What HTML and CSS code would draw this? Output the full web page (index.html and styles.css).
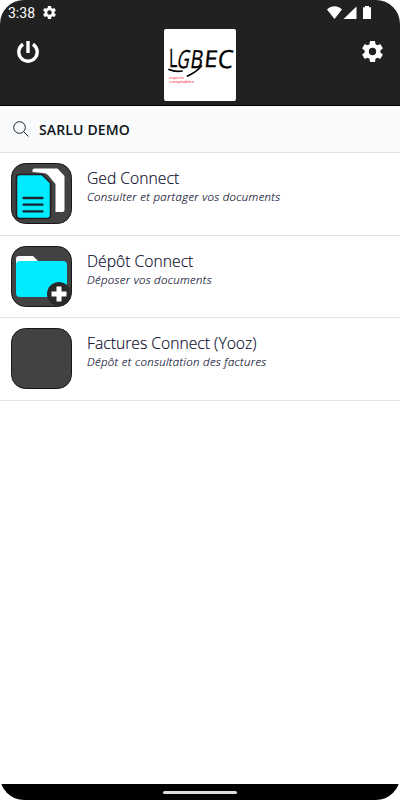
FILE: index.html
```html
<!DOCTYPE html>
<html lang="fr">

<head>
    <meta charset="UTF-8">
    <meta name="viewport" content="width=device-width, initial-scale=1.0">
    <title>LGBEC</title>
    <link rel="stylesheet" href="styles.css">
</head>

<body>
    <div class="phone">
        <header class="header">
            <div class="status">
                <span class="time">3:38</span>
                <svg class="status-gear" viewBox="2 2 20 20"><use href="#gear" /></svg>
                <svg class="status-icons" width="46" height="14" viewBox="0 0 46 14">
                    <path d="M0 3.4C4.500-.7 10.500-.7 15 3.400L7.500 13z" />
                    <path d="M29.500.5V13H16.500z" />
                    <path d="M38 0h4v1.300h2V13h-8V1.300h2z" />
                </svg>
            </div>
            <div class="toolbar">
                <svg class="power" width="22" height="22" viewBox="0 0 22 22">
                    <path d="M6.100 3.200a9.200 9.200 0 1 0 9.800 0" />
                    <path d="M11 0v12" />
                </svg>
                <svg class="logo" width="72" height="72" viewBox="0 0 72 72">
                    <rect width="72" height="72" rx="2" fill="#fff" />
                    <g class="logo-letters">
                        <text transform="translate(5 38) scale(.64 1)" font-size="25">L</text>
                        <text transform="translate(12 39) skewX(-12) scale(.68 1)" font-size="25">G</text>
                        <text transform="translate(25.500 38.500) skewX(-8) scale(.78 1)" font-size="25">B</text>
                        <text transform="translate(39.500 38) skewX(-6) scale(1.05 1)" font-size="23">E</text>
                        <text transform="translate(53 38.500) skewX(-6) scale(.98 1)" font-size="25">C</text>
                    </g>
                    <path class="stroke" d="M5 40.500q6 2.500 13 1.500M37.500 37q-5 6-14 10" />
                    <text class="logo-sub" x="5" y="49.500" textLength="15" lengthAdjust="spacingAndGlyphs">experts</text>
                    <text class="logo-sub" x="5" y="53.700" textLength="25" lengthAdjust="spacingAndGlyphs">comptables</text>
                </svg>
                <svg class="settings" viewBox="2 2 20 20">
                    <path id="gear" d="M19.430 12.980c.04-.32.070-.64.070-.98s-.030-.66-.070-.98l2.110-1.650c.19-.15.240-.42.120-.64l-2-3.460c-.12-.22-.39-.3-.61-.22l-2.490 1c-.52-.4-1.080-.73-1.690-.98l-.38-2.650C14.460 2.180 14.250 2 14 2h-4c-.25 0-.46.18-.49.420l-.38 2.650c-.61.250-1.170.59-1.690.98l-2.490-1c-.23-.09-.49 0-.61.220l-2 3.460c-.13.220-.07.490.12.640l2.110 1.650c-.04.320-.07.650-.07.980s.030.660.070.980l-2.110 1.650c-.19.150-.24.420-.12.640l2 3.460c.12.220.39.300.61.220l2.490-1c.52.400 1.080.730 1.690.980l.38 2.650c.03.240.24.420.49.420h4c.25 0 .46-.18.490-.42l.38-2.650c.61-.25 1.170-.59 1.690-.98l2.490 1c.23.090.49 0 .61-.22l2-3.460c.12-.22.070-.49-.12-.64zM12 15.500a3.500 3.500 0 1 1 0-7 3.500 3.500 0 0 1 0 7z" />
                </svg>
            </div>
        </header>

        <div class="search">
            <svg width="17" height="17" viewBox="0 0 17 17">
                <circle cx="6.500" cy="6.500" r="5.800" />
                <path d="M10.500 10.500l5 5" />
            </svg>
            <span>SARLU DEMO</span>
        </div>

        <main class="list">
            <div class="item">
                <svg class="item-icon" viewBox="0 0 61 61">
                    <rect class="tile" x=".5" y=".5" width="60" height="60" rx="14" />
                    <path class="white" d="M21.500 9V7q0-1.500 2-1.500h23l7 7.500v34q0 2-2 2h-7V21L37 12q-2-2-5-2z" />
                    <path class="page" d="M9 11.500h22l8.500 8.500v32q0 3.500-3.500 3.500H9q-3.500 0-3.500-3.500V15q0-3.500 3.500-3.500z" />
                    <path class="lines" d="M12.500 35h19M12.500 41.700h19M12.500 48.400h19" />
                </svg>
                <div>
                    <h2>Ged Connect</h2>
                    <p>Consulter et partager vos documents</p>
                </div>
            </div>
            <div class="item">
                <svg class="item-icon" viewBox="0 0 61 61">
                    <rect class="tile" x=".5" y=".5" width="60" height="60" rx="14" />
                    <path class="white" d="M5 19v-6q0-3 3-3h14l5 5v5H5z" />
                    <rect class="folder" x="5" y="15" width="51" height="36" rx="4" />
                    <circle class="badge" cx="48" cy="48" r="12" />
                    <path class="plus" d="M48 40.500v15M40.500 48h15" />
                </svg>
                <div>
                    <h2>Dépôt Connect</h2>
                    <p>Déposer vos documents</p>
                </div>
            </div>
            <div class="item">
                <svg class="item-icon" viewBox="0 0 61 61">
                    <rect class="tile" x=".5" y=".5" width="60" height="60" rx="14" />
                </svg>
                <div>
                    <h2>Factures Connect (Yooz)</h2>
                    <p>Dépôt et consultation des factures</p>
                </div>
            </div>
        </main>

        <footer class="navbar">
            <div class="handle"></div>
        </footer>
    </div>
</body>

</html>
```
FILE: styles.css
```css
* {
    box-sizing: border-box;
}

body {
    margin: 0;
    background: #fff;
    font-family: "Open Sans", sans-serif;
}

.phone {
    height: 800px;
    display: flex;
    flex-direction: column;
    border-radius: 24px;
    overflow: hidden;
}

.header {
    height: 106px;
    background: #212121;
    border-bottom: 1px solid #000;
    color: #fff;
    fill: #fff;
}

.status {
    height: 25px;
    padding-left: 8px;
    display: flex;
    align-items: center;
}

.time {
    width: 29px;
    margin-right: 6px;
    font: 14px Roboto, sans-serif;
}

.status-gear {
    width: 13px;
    height: 13px;
}

.status-icons {
    margin-left: auto;
    margin-right: 27px;
}

.toolbar {
    display: flex;
    justify-content: space-between;
    padding: 4px 17px 0 16.5px;
}

.power {
    margin-top: 12px;
    fill: none;
    stroke: #fff;
    stroke-width: 3.4;
}

.settings {
    width: 21px;
    height: 21px;
    margin-top: 12px;
}

.logo {
    margin-left: -1px;
}

.logo-letters {
    font-family: "Open Sans", sans-serif;
    fill: #000;
    stroke: #000;
    stroke-width: .3;
}

.stroke {
    fill: none;
    stroke: #000;
    stroke-width: 1.7;
    stroke-linecap: round;
}

.logo-sub {
    font-family: "Liberation Sans", sans-serif;
    font-size: 4px;
    fill: #ee3740;
}

.search {
    height: 47px;
    display: flex;
    align-items: center;
    gap: 9px;
    padding-left: 13px;
    background: #f8fafc;
    border-bottom: 1px solid #dfe1e3;
    color: #101418;
    font-size: 14px;
    font-weight: 600;
    letter-spacing: .15px;
}

.search svg {
    fill: none;
    stroke: #20262a;
}

.list {
    flex: 1;
}

.item {
    height: 82.6px;
    display: flex;
    gap: 15.5px;
    padding: 10px 10px 0 10.5px;
    border-bottom: 1px solid #e2e2e2;
    color: #08082a;
}

.item-icon {
    width: 61px;
    height: 61px;
}

.item h2 {
    margin: 5px 0 0;
    font-size: 15.7px;
    line-height: 21px;
    font-weight: 300;
    -webkit-text-stroke: .15px;
}

.item p {
    margin: 0;
    font-size: 11.4px;
    line-height: 15px;
    font-style: italic;
    font-weight: 300;
    letter-spacing: .33px;
    -webkit-text-stroke: .15px;
}

.tile {
    fill: #424242;
    stroke: #171717;
}

.white {
    fill: #fff;
}

.page {
    fill: #00ebff;
    stroke: #29191c;
    stroke-width: 1.5;
}

.lines {
    stroke: #17262c;
    stroke-width: 2.3;
    stroke-linecap: round;
}

.folder {
    fill: #00ebff;
}

.badge {
    fill: #292929;
}

.plus {
    stroke: #fff;
    stroke-width: 5;
}

.navbar {
    height: 16px;
    display: flex;
    justify-content: center;
    padding-top: 7px;
    background: #000;
}

.handle {
    width: 74px;
    height: 3px;
    border-radius: 2px;
    background: #ddd;
}
```
